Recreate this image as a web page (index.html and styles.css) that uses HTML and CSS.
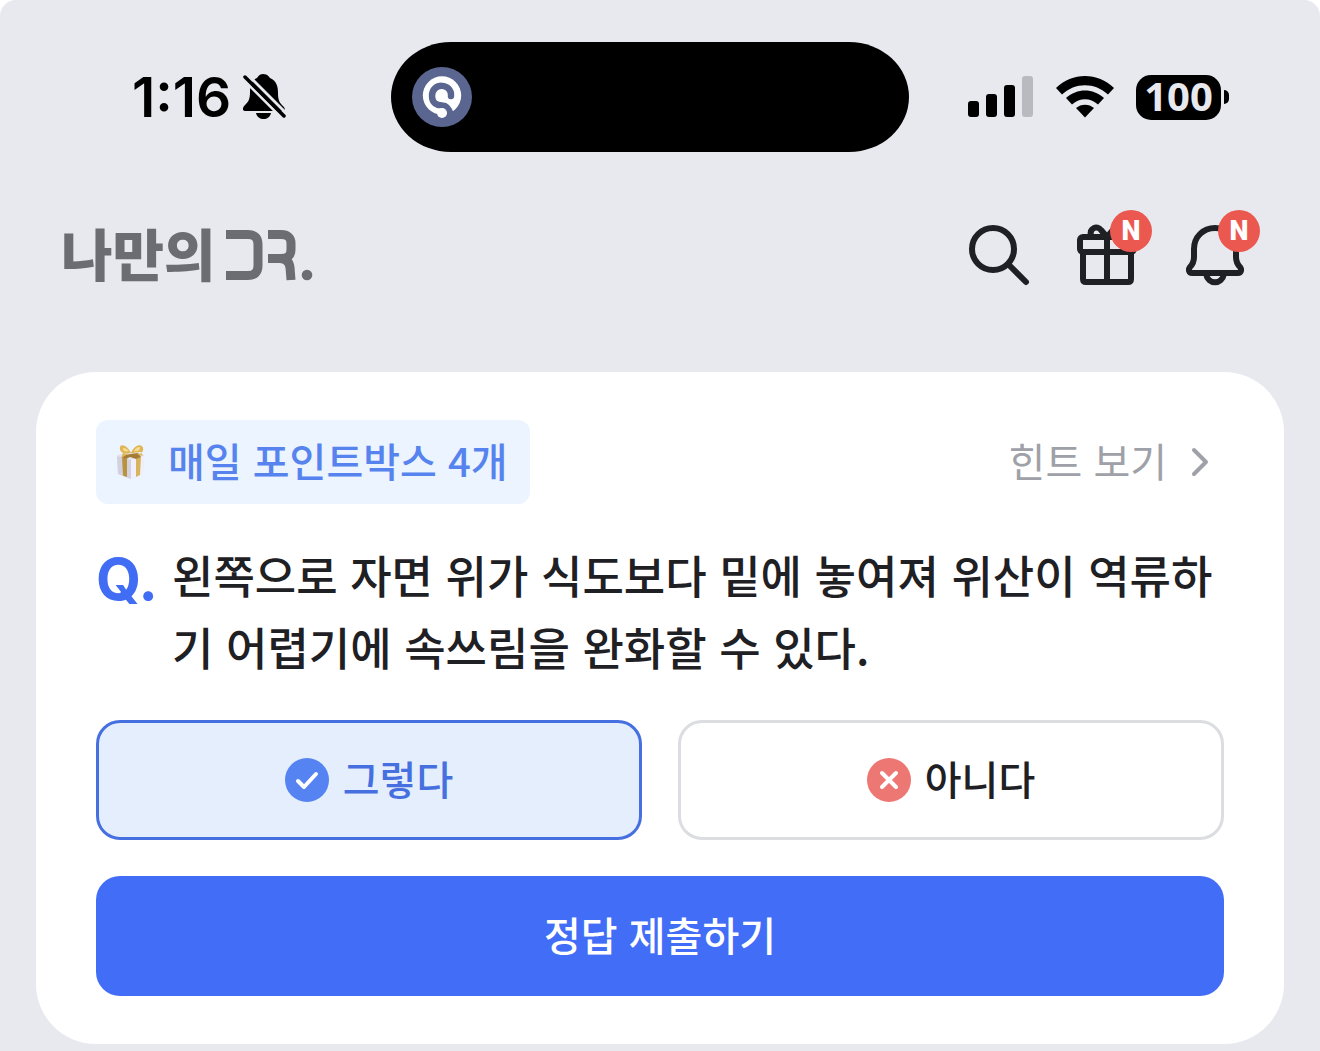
FILE: index.html
```html
<!DOCTYPE html>
<html lang="ko">
<head>
    <meta charset="UTF-8">
    <meta name="viewport" content="width=device-width, initial-scale=1.0">
    <title>나만의DR.</title>
    <link rel="stylesheet" href="styles.css">
</head>
<body>
<div class="screen">

    <!-- 상태바 -->
    <div class="status">
        <div class="status-left">
            <span class="time">1:16</span>
            <svg width="44" height="48" viewBox="0 0 44 48" aria-hidden="true">
                <path d="M20 1c5 0 6 3 7 4 7 3 8 9 8 15 0 8 2 10 5 13 3 3 2 5-1 5H3c-4 0-4-3-1-6 3-3 5-5 5-13C7 12 9 7 14 5c1-1 2-4 6-4z"/>
                <path d="M13 40h15c-1 4-4 6-7.500 6S14 44 13 40z"/>
                <path d="M0 6l41 41M4 1l41 41" stroke="#e8e9ee" stroke-width="3"/>
                <path d="M2 4l39 39" stroke="#000" stroke-width="3.500" stroke-linecap="round"/>
            </svg>
        </div>
        <div class="island">
            <svg width="60" height="60" viewBox="0 0 60 60" aria-hidden="true">
                <circle cx="30" cy="30" r="30" fill="#5a6590"/>
                <circle cx="30" cy="28.500" r="19.200" fill="#fff"/>
                <path d="M39 29C40 16 20 15 20 29c0 7 5 9.500 10 9.500 5 0 7.500 4 9 10l-4 3" fill="none" stroke="#5a6590" stroke-width="6.500" stroke-linecap="round"/>
                <circle cx="30" cy="28.500" r="5.300" fill="#fff"/>
                <circle cx="30" cy="46" r="5" fill="#fff"/>
            </svg>
        </div>
        <div class="status-right">
            <svg width="66" height="42" viewBox="0 0 66 42" aria-hidden="true">
                <rect x="0" y="25" width="11" height="16" rx="3"/>
                <rect x="18" y="18" width="11" height="23" rx="3"/>
                <rect x="36" y="9" width="11" height="32" rx="3"/>
                <rect x="54" y="0" width="11" height="41" rx="3" fill="#b9babf"/>
            </svg>
            <svg class="wifi" width="58" height="42" viewBox="0 0 58 42" aria-hidden="true">
                <path d="M0 12C16-4 42-4 58 12l-6 6.500C39 6 19 6 6 18.500z"/>
                <path d="M10 22c11-10 27-10 38 0l-6 6.500c-8-7-18-7-26 0z"/>
                <path d="M20 32c5-4.500 13-4.500 18 0l-9 9.500z"/>
            </svg>
            <span class="battery">100</span>
            <span class="battery-cap"></span>
        </div>
    </div>

    <header class="header">
        <h1 class="logo">
            <span>나만의</span>
            <svg width="90" height="62" viewBox="0 -6 90 62" role="img" aria-label="DR.">
                <g fill="none" stroke="#6b6d73" stroke-width="9">
                    <path d="M1 7.500h22q10 0 10 10v21q0 10-10 10H1"/>
                    <path d="M43 7.500h13q10 0 10 9v6q0 9-10 9H43M54 31.500q10 0 11 9l1 12.500"/>
                </g>
                <circle cx="82" cy="48" r="5.300" fill="#6b6d73"/>
            </svg>
        </h1>
        <nav class="menu">
            <button type="button" class="icon-btn" aria-label="검색">
                <svg viewBox="0 0 72 72">
                    <circle cx="30" cy="30" r="21"/>
                    <path d="M45 45l18 18"/>
                </svg>
            </button>
            <button type="button" class="icon-btn" aria-label="선물">
                <svg viewBox="0 0 72 72">
                    <rect x="9" y="18" width="54" height="15" rx="3"/>
                    <path d="M12 33v27q0 3 3 3h42q3 0 3-3V33M36 18v45"/>
                    <path d="M20 17c-2-8 6-11 10-6l6 7 6-7c4-5 12-2 10 6"/>
                </svg>
                <span class="badge">N</span>
            </button>
            <button type="button" class="icon-btn" aria-label="알림">
                <svg viewBox="0 0 72 72">
                    <path d="M36 9c-12 0-21 9-21 21v8c0 5-1 7-4 10-2 3-1 6 2 6h46c3 0 4-3 2-6-3-3-4-5-4-10v-8C57 18 48 9 36 9z"/>
                    <path d="M27 55c2 11 16 11 18 0"/>
                </svg>
                <span class="badge">N</span>
            </button>
        </nav>
    </header>

    <form class="card">
        <div class="card-top">
            <span class="point">
                <svg width="30" height="36" viewBox="0 0 30 36" aria-hidden="true">
                    <path d="M1 11l14-3 13 3-1 19-12 5-13-5z" fill="#e4e4f0"/>
                    <path d="M1 12l14 4v19L2 30z" fill="#d2d1df"/>
                    <path d="M15 16l13-4-1 18-12 5z" fill="#f1f0fa"/>
                    <path d="M6 13l5 2v18l-4-1.500z" fill="#b8923d"/>
                    <path d="M20 14.500l5-1.500-1 18-4 2z" fill="#d8b45e"/>
                    <path d="M8 11l14-2 3 4-5 2-6-2-4 2-4-2z" fill="#a57c35"/>
                    <path d="M15 9C12 2 5-1 4 3s3 8 11 6zM15 9c3-8 11-10 12-5s-4 8-12 5zM14 9l-9 5 2-5zM16 9l11 3-2-4z" fill="#e0b655"/>
                    <path d="M13 7C10 4 7 3 7 5s2 3 6 2zM18 7c2-4 6-5 6-3s-2 4-6 3z" fill="#f7dc94"/>
                </svg>
                <span class="label">매일 포인트박스 4개</span>
            </span>
            <a class="hint" href="#">
                <span class="label">힌트 보기</span>
                <svg width="18" height="30" viewBox="0 0 18 30" aria-hidden="true">
                    <path d="M3 3l12 12L3 27" fill="none" stroke="#9fa1a8" stroke-width="4" stroke-linecap="round" stroke-linejoin="round"/>
                </svg>
            </a>
        </div>

        <div class="question">
            <span class="q">Q.</span>
            <p id="quiz">왼쪽으로 자면 위가 식도보다 밑에 놓여져 위산이 역류하기 어렵기에 속쓰림을 완화할 수 있다.</p>
        </div>

        <div class="answers" role="radiogroup" aria-labelledby="quiz">
            <label class="answer">
                <input type="radio" name="answer" value="o" checked>
                <svg width="44" height="44" viewBox="0 0 44 44" aria-hidden="true">
                    <circle cx="22" cy="22" r="22" fill="#5683f2"/>
                    <path d="M13 23l6 6 12-13" fill="none" stroke="#fff" stroke-width="4" stroke-linecap="round" stroke-linejoin="round"/>
                </svg>
                <span class="label">그렇다</span>
            </label>
            <label class="answer">
                <input type="radio" name="answer" value="x">
                <svg width="44" height="44" viewBox="0 0 44 44" aria-hidden="true">
                    <circle cx="22" cy="22" r="22" fill="#ed7773"/>
                    <path d="M15 15l14 14M29 15L15 29" stroke="#fff" stroke-width="4" stroke-linecap="round"/>
                </svg>
                <span class="label">아니다</span>
            </label>
        </div>

        <button type="submit" class="submit">정답 제출하기</button>
    </form>

</div>
</body>
</html>
```
FILE: styles.css
```css
* {
    box-sizing: border-box;
}

body {
    margin: 0;
    background: #fff;
    color: #1f2024;
    font-family: "Noto Sans CJK KR", sans-serif;
    font-size: 40px;
    font-weight: 500;
}

button {
    border: 0;
    padding: 0;
    font: inherit;
    cursor: pointer;
}

svg {
    flex: none;
}

.screen {
    min-height: 100vh;
    padding-top: 42px;
    border-radius: 16px 16px 0 0;
    background: #e8e9ee;
}

/* 상태바 */
.status {
    display: grid;
    grid-template-columns: 1fr 518px 1fr;
    align-items: center;
    padding: 0 70px 0 50px;
    color: #000;
}

.status-left {
    display: flex;
    align-items: center;
    gap: 12px;
    padding-left: 82px;
}

.time {
    font-family: Inter, sans-serif;
    font-size: 55px;
    font-weight: 600;
    line-height: 60px;
}

.island {
    display: flex;
    align-items: center;
    height: 110px;
    padding-left: 21px;
    border-radius: 60px / 55px;
    background: #000;
}

.status-right {
    display: flex;
    align-items: center;
    justify-content: flex-end;
    padding-right: 21px;
}

.wifi {
    margin: 0 22px;
}

.battery {
    width: 85px;
    height: 45px;
    border-radius: 15px;
    background: #000;
    color: #e8e9ee;
    font-family: "Noto Sans", sans-serif;
    font-weight: 700;
    line-height: 42px;
    text-align: center;
}

.battery-cap {
    width: 5px;
    height: 14px;
    margin-left: 3px;
    border-radius: 0 5px 5px 0;
    background: #000;
}

/* 헤더 */
.header {
    display: flex;
    justify-content: space-between;
    padding: 67px 69px 81px 61px;
}

.logo {
    display: flex;
    align-items: center;
    align-self: flex-start;
    gap: 9px;
    margin: 0;
    color: #6b6d73;
    font-size: 56px;
    font-weight: 900;
    line-height: 66px;
}

.menu {
    display: flex;
    gap: 36px;
}

.icon-btn {
    position: relative;
    width: 72px;
    height: 72px;
    background: none;
}

.icon-btn svg {
    display: block;
    fill: none;
    stroke: #1f2024;
    stroke-width: 6;
    stroke-linecap: round;
    stroke-linejoin: round;
}

.badge {
    position: absolute;
    top: -9px;
    right: -9px;
    width: 42px;
    border-radius: 50%;
    background: #eb5850;
    color: #fff;
    font-family: Roboto, sans-serif;
    font-size: 27px;
    font-weight: 900;
    line-height: 42px;
    text-align: center;
}

/* 퀴즈 카드 */
.card {
    margin: 0 36px;
    padding: 48px 60px;
    border-radius: 60px;
    background: #fff;
}

.card-top {
    display: flex;
    align-items: center;
    justify-content: space-between;
}

.label {
    padding-bottom: 4px;
    line-height: 60px;
}

.point {
    display: flex;
    align-items: center;
    gap: 22px;
    height: 84px;
    padding: 0 22px 0 20px;
    border-radius: 12px;
    background: #ebf4ff;
    color: #5683ee;
}

.hint {
    display: flex;
    align-items: center;
    gap: 24px;
    padding-right: 15px;
    color: #9fa1a8;
    font-weight: 400;
    text-decoration: none;
}

.question {
    display: flex;
    gap: 16px;
    margin: 35px 0 37px;
    font-size: 45px;
    line-height: 72px;
}

.question p {
    flex: 1;
    margin: 0;
}

.q {
    width: 60px;
    color: #416df5;
    font-family: Inter, sans-serif;
    font-size: 58px;
    font-weight: 700;
    line-height: 80px;
}

.answers {
    display: grid;
    grid-template-columns: 1fr 1fr;
    gap: 36px;
    margin-bottom: 36px;
}

.answer {
    position: relative;
    display: flex;
    align-items: center;
    justify-content: center;
    gap: 14px;
    height: 120px;
    border: 3px solid #dcdde0;
    border-radius: 24px;
    cursor: pointer;
}

.answer input {
    position: absolute;
    opacity: 0;
}

.answer:has(input:checked) {
    border-color: #466fe0;
    background: #e4eefd;
    color: #466fe0;
}

.submit {
    display: block;
    width: 100%;
    height: 120px;
    padding-bottom: 4px;
    border-radius: 24px;
    background: #416df7;
    color: #fff;
}
```
